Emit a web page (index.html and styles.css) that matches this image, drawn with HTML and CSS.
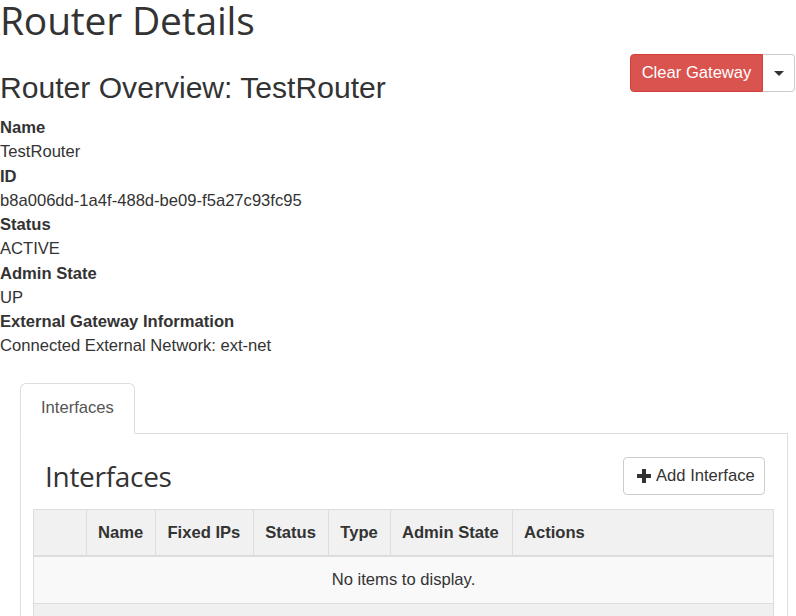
FILE: index.html
```html
<!DOCTYPE html>
<html>
<head>
<meta charset="utf-8">
<link rel="stylesheet" href="styles.css">
</head>
<body>
<h1 class="page-title">Router Details</h1>
<div class="overview-head">
  <h2 class="overview-title">Router Overview: TestRouter</h2>
  <div class="btn-group">
    <button class="btn btn-danger">Clear Gateway</button>
    <button class="btn btn-caret"><span class="caret"></span></button>
  </div>
</div>
<dl class="details">
  <dt>Name</dt><dd>TestRouter</dd>
  <dt>ID</dt><dd>b8a006dd-1a4f-488d-be09-f5a27c93fc95</dd>
  <dt>Status</dt><dd>ACTIVE</dd>
  <dt>Admin State</dt><dd>UP</dd>
  <dt>External Gateway Information</dt><dd>Connected External Network: ext-net</dd>
</dl>
<div class="tabs-wrap">
  <ul class="tabs">
    <li class="tab active">Interfaces</li>
    <li class="tab-fill"></li>
  </ul>
  <div class="tab-panel">
    <div class="table-head">
      <h3 class="table-title">Interfaces</h3>
      <button class="btn btn-default"><svg class="plus" width="14" height="14" viewBox="0 0 14 14"><path d="M5 0h4v5h5v4H9v5H5V9H0V5h5z" fill="#333"/></svg>Add Interface</button>
    </div>
    <table class="data">
      <thead>
        <tr><th class="sel"></th><th>Name</th><th>Fixed IPs</th><th>Status</th><th>Type</th><th>Admin State</th><th class="act">Actions</th></tr>
      </thead>
      <tbody>
        <tr class="empty"><td colspan="7">No items to display.</td></tr>
      </tbody>
      <tfoot>
        <tr><td colspan="7"></td></tr>
      </tfoot>
    </table>
  </div>
</div>
</body>
</html>
```
FILE: styles.css
```css
html, body { margin: 0; padding: 0; background: #fff; }
* { box-sizing: border-box; }
body {
  font-family: "Liberation Sans", Arial, sans-serif;
  font-size: 16.6px;
  line-height: 24.25px;
  color: #333;
  width: 796px;
  height: 616px;
  overflow: hidden;
}
.page-title {
  font-family: "Open Sans", "Noto Sans", sans-serif;
  font-weight: 400;
  font-size: 39px;
  line-height: 40px;
  margin: 0;
  color: #333;
  letter-spacing: -0.2px;
}
.overview-head {
  display: flex;
  justify-content: space-between;
  align-items: flex-start;
  margin-top: 14px;
}
.overview-title {
  font-weight: 400;
  font-size: 30.1px;
  line-height: 34px;
  margin: 17px 0 3px 0;
}
.btn-group { display: flex; margin-right: 1px; }
.btn {
  font-family: "Liberation Sans", Arial, sans-serif;
  font-size: 16.6px;
  line-height: 22px;
  border: 1px solid #ccc;
  background: #fff;
  color: #333;
  padding: 7px 14px;
  margin: 0;
  white-space: nowrap;
  cursor: pointer;
}
.btn-danger {
  background: #d9534f;
  border-color: #d43f3a;
  color: #fff;
  border-radius: 4px 0 0 4px;
  width: 133px;
  height: 38px;
  padding: 0;
}
.btn-caret {
  width: 32px;
  height: 38px;
  border-left: 0;
  border-radius: 0 4px 4px 0;
  display: flex;
  align-items: center;
  justify-content: center;
  padding: 0;
}
.caret {
  width: 0; height: 0;
  border-left: 5px solid transparent;
  border-right: 5px solid transparent;
  border-top: 5px solid #333;
}
.details { margin: 8px 0 0 0; }
.details dt { font-weight: 700; }
.details dd { margin: 0; }
.tabs-wrap { margin: 24px 8px 0 20px; }
.tabs {
  list-style: none;
  margin: 0; padding: 0;
  display: flex;
}
.tab {
  padding: 13px 20px 14px;
  border: 1px solid #ddd;
  border-bottom-color: transparent;
  border-radius: 6px 6px 0 0;
  color: #555;
  line-height: 22px;
}
.tab-fill { flex: 1; border-bottom: 1px solid #ddd; }
.tab-panel {
  border: 1px solid #ddd;
  border-top: 0;
  padding: 0 13px 0 12px;
  height: 200px;
}
.table-head {
  display: flex;
  justify-content: space-between;
  align-items: center;
  padding: 23px 9px 14px 12px;
}
.table-title {
  font-family: "Open Sans", "Noto Sans", sans-serif;
  font-weight: 400;
  font-size: 28px;
  line-height: 36px;
  margin: 0;
  letter-spacing: -0.3px;
}
.btn-default {
  border-radius: 4px;
  height: 38px;
  width: 142px;
  display: flex;
  align-items: center;
  padding: 0 13px;
  gap: 5px;
}
.plus { flex: none; }
.data {
  width: 100%;
  border-collapse: collapse;
  border: 1px solid #ddd;
}
.data th {
  background: #f1f1f1;
  font-weight: 700;
  text-align: left;
  padding: 12px 11px 11px;
  border-left: 1px solid #ddd;
  border-bottom: 2px solid #ddd;
  line-height: 22px;
  white-space: nowrap;
}
.data th.sel { width: 53px; }
.data th.act { width: 261px; }
.data .empty td {
  background: #f9f9f9;
  text-align: center;
  padding: 11px;
  line-height: 24px;
  border-bottom: 1px solid #ddd;
}
.data tfoot td { background: #f0f0f0; height: 30px; }
```
